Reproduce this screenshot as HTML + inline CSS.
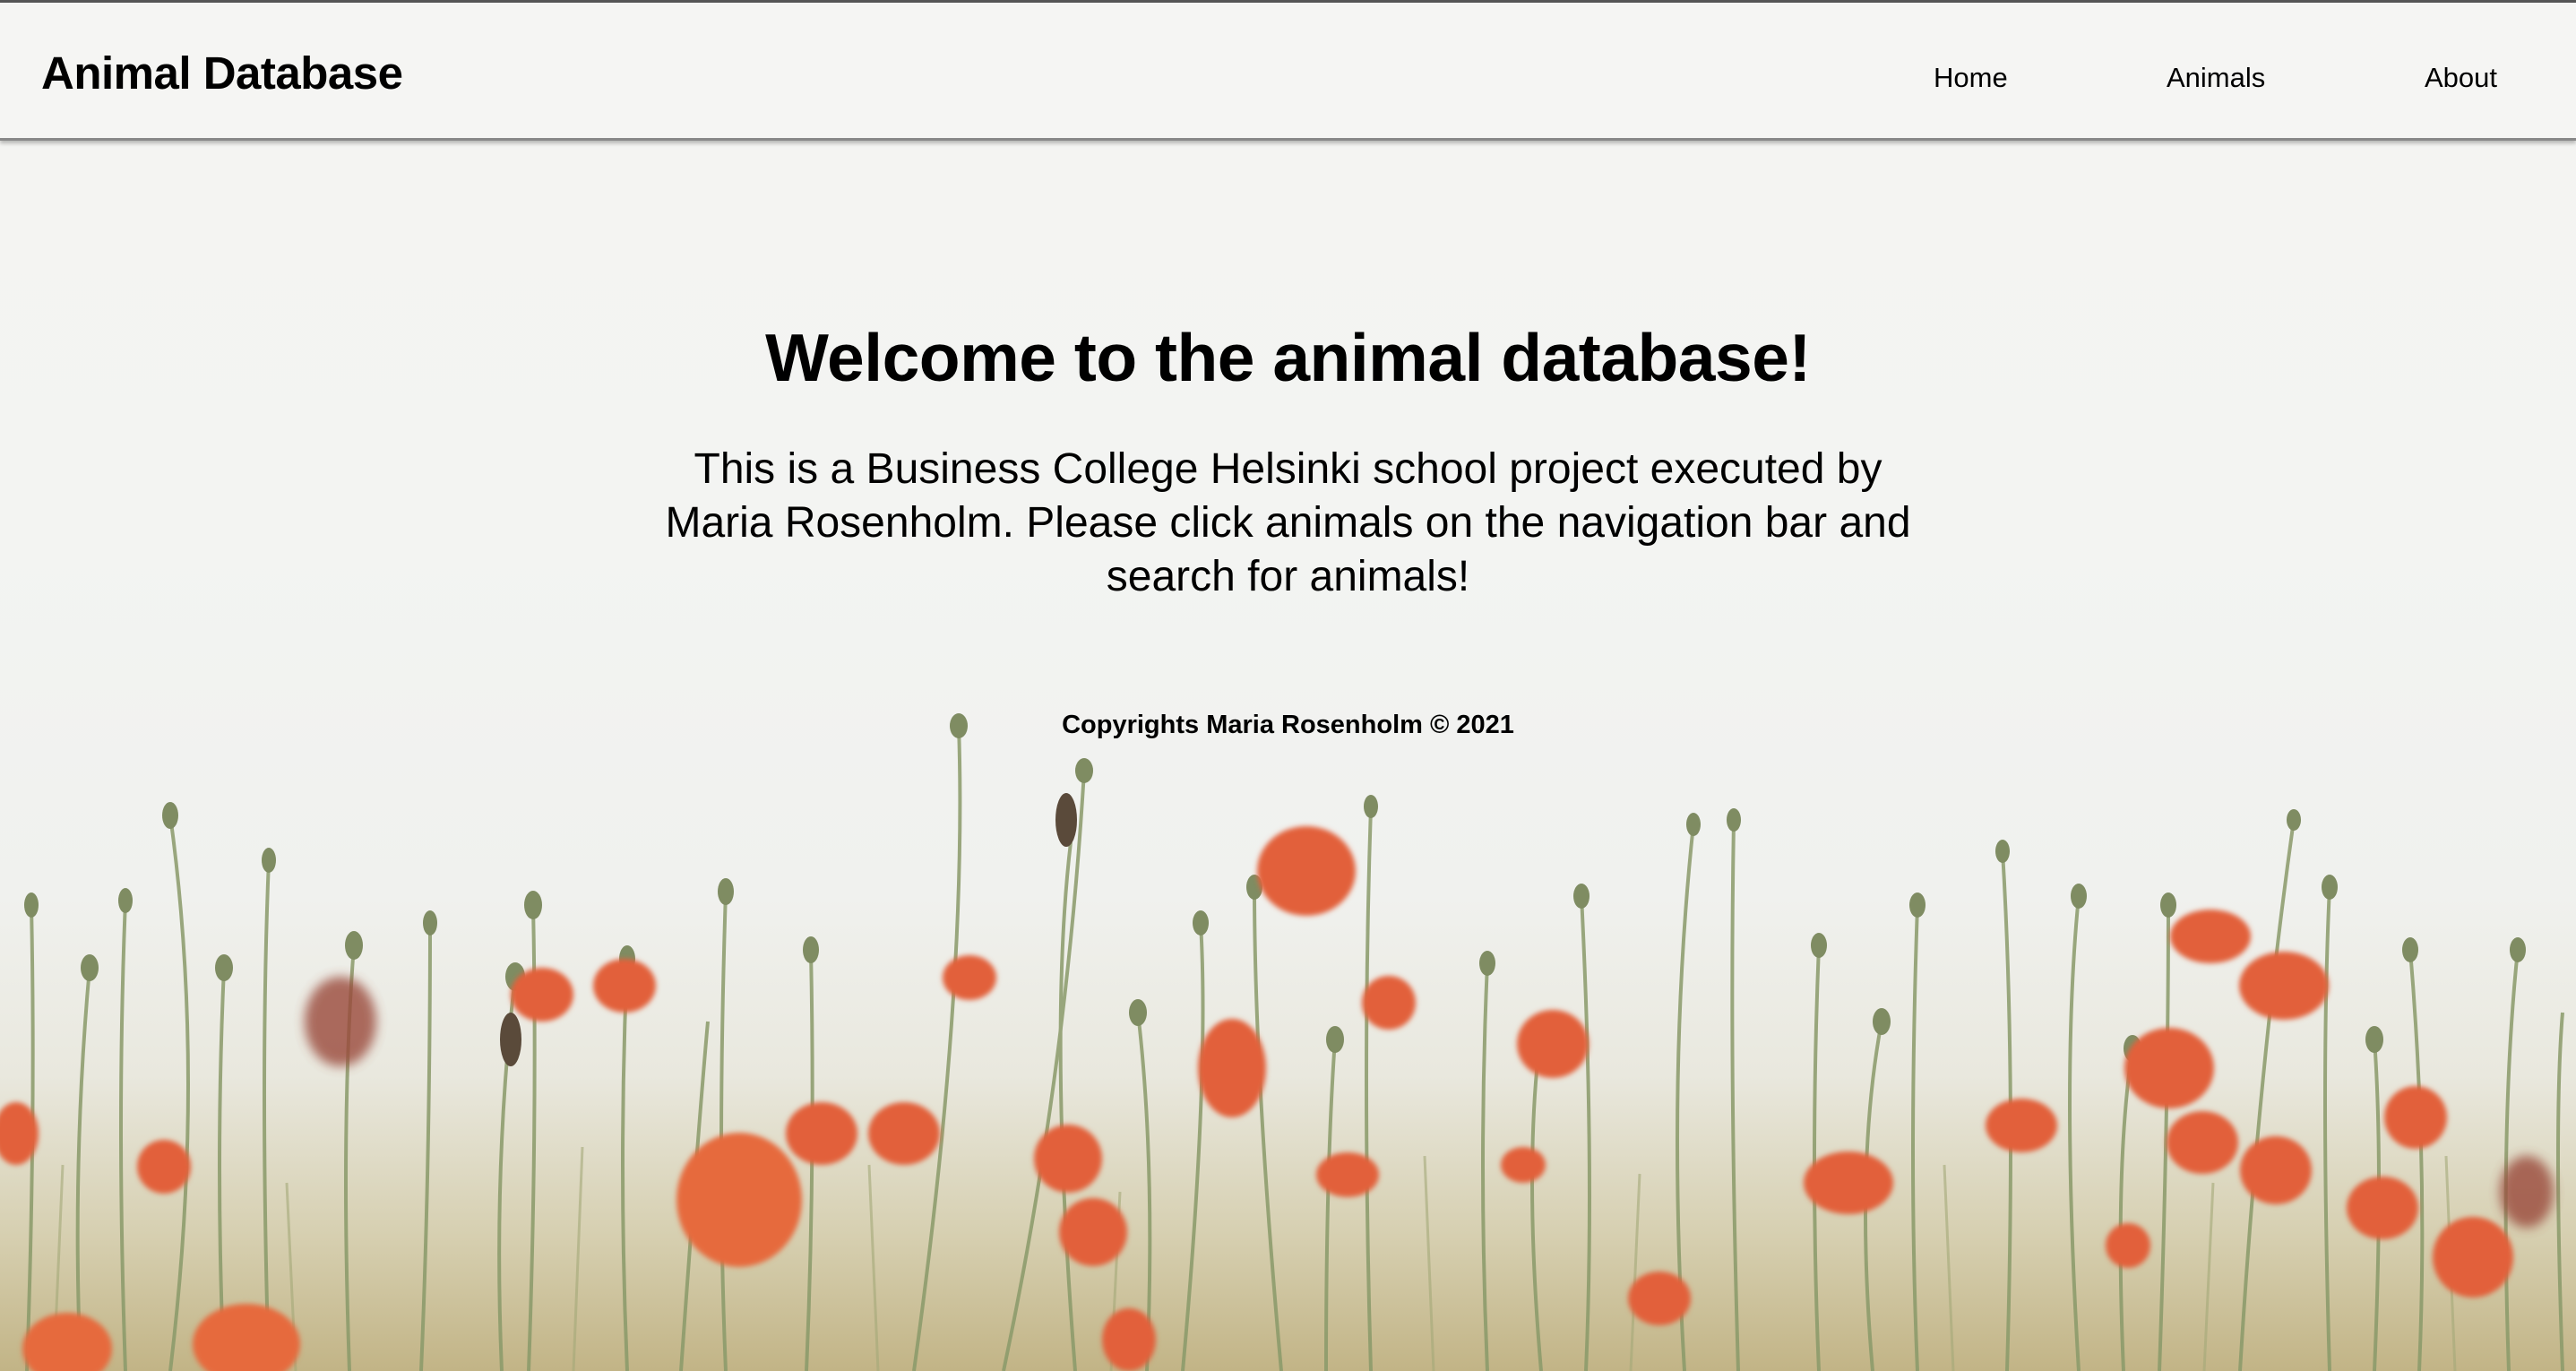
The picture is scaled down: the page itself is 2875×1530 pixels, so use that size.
<!DOCTYPE html>
<html><head><meta charset="utf-8"><style>
html,body{margin:0;padding:0}
body{width:2875px;height:1530px;overflow:hidden;position:relative;font-family:"Liberation Sans",sans-serif;background:linear-gradient(#f4f4f2 0,#f3f4f2 600px,#f0f1ee 1000px,#e9e8de 1200px,#d6cfb0 1380px,#c2b486 1530px)}
svg.bg{position:absolute;left:0;top:0}
.nav{position:absolute;left:0;top:0;width:2875px;height:157px;border-top:3px solid #555;border-bottom:3px solid #888;box-shadow:0 3px 4px rgba(0,0,0,.25);background:rgba(245,245,243,.9);box-sizing:border-box}
.brand{position:absolute;left:46px;top:49px;font-size:51px;font-weight:bold;color:#000;letter-spacing:-0.5px}
.nav a{position:absolute;top:66px;font-size:31px;color:#000;text-decoration:none}
h1{position:absolute;left:0;width:2875px;top:356px;margin:0;text-align:center;font-size:75px;font-weight:bold;color:#000;letter-spacing:-0.5px}
p.intro{position:absolute;left:720px;width:1435px;top:494px;margin:0;text-align:center;font-size:48px;line-height:60px;color:#000}
.copy{position:absolute;left:0;width:2875px;top:793px;text-align:center;font-size:29px;font-weight:bold;color:#000}
</style></head><body>
<svg class="bg" width="2875" height="1530" viewBox="0 0 2875 1530">
<defs><filter id="b"><feGaussianBlur stdDeviation="3"/></filter><filter id="b2"><feGaussianBlur stdDeviation="6"/></filter></defs>
<g stroke="#8a9a6a" stroke-width="4" fill="none" opacity=".85">
<path d="M30 1530 Q40 1250 35 1010"/><path d="M140 1530 Q130 1250 140 1005"/><path d="M190 1530 Q230 1200 190 910"/><path d="M300 1530 Q290 1200 300 960"/><path d="M390 1530 Q380 1250 395 1055"/><path d="M470 1530 Q480 1300 480 1030"/><path d="M590 1530 Q600 1250 595 1010"/><path d="M700 1530 Q690 1300 700 1070"/><path d="M810 1530 Q800 1300 810 995"/><path d="M900 1530 Q910 1300 905 1060"/><path d="M1020 1530 Q1080 1100 1070 810"/><path d="M1120 1530 Q1190 1200 1210 860"/><path d="M1200 1530 Q1170 1150 1195 940"/><path d="M1320 1530 Q1350 1200 1340 1030"/><path d="M1430 1530 Q1400 1200 1400 990"/><path d="M1530 1530 Q1520 1200 1530 900"/><path d="M1660 1530 Q1650 1300 1660 1075"/><path d="M1770 1530 Q1780 1300 1765 1000"/><path d="M1880 1530 Q1860 1200 1890 920"/><path d="M1940 1530 Q1930 1200 1935 915"/><path d="M2030 1530 Q2020 1300 2030 1055"/><path d="M2140 1530 Q2130 1300 2140 1010"/><path d="M2240 1530 Q2250 1200 2235 950"/><path d="M2320 1530 Q2300 1200 2320 1000"/><path d="M2410 1530 Q2420 1250 2420 1010"/><path d="M2500 1530 Q2520 1200 2560 915"/><path d="M2600 1530 Q2590 1200 2600 990"/><path d="M2700 1530 Q2710 1300 2690 1060"/><path d="M2800 1530 Q2790 1250 2810 1060"/><path d="M2860 1530 Q2850 1250 2860 1130"/>
<path d="M90 1530 Q80 1300 100 1080"/><path d="M250 1530 Q240 1300 250 1080"/><path d="M560 1530 Q550 1300 575 1090"/><path d="M760 1530 Q780 1250 790 1140"/><path d="M1280 1530 Q1290 1300 1270 1130"/><path d="M1480 1530 Q1480 1300 1490 1160"/><path d="M1720 1530 Q1700 1300 1720 1150"/><path d="M2090 1530 Q2070 1300 2100 1140"/><path d="M2370 1530 Q2360 1300 2380 1170"/><path d="M2650 1530 Q2660 1300 2650 1160"/>
</g>
<g stroke="#a3a878" stroke-width="3" fill="none" opacity=".6">
<path d="M60 1530 L70 1300"/><path d="M330 1530 L320 1320"/><path d="M640 1530 L650 1280"/><path d="M980 1530 L970 1300"/><path d="M1240 1530 L1250 1330"/><path d="M1600 1530 L1590 1290"/><path d="M1820 1530 L1830 1310"/><path d="M2180 1530 L2170 1300"/><path d="M2460 1530 L2470 1320"/><path d="M2740 1530 L2730 1290"/>
</g>
<g fill="#7f8c62">
<ellipse cx="35" cy="1010" rx="8" ry="14"/><ellipse cx="140" cy="1005" rx="8" ry="14"/><ellipse cx="190" cy="910" rx="9" ry="15"/><ellipse cx="300" cy="960" rx="8" ry="14"/><ellipse cx="395" cy="1055" rx="10" ry="16"/><ellipse cx="480" cy="1030" rx="8" ry="14"/><ellipse cx="595" cy="1010" rx="10" ry="16"/><ellipse cx="700" cy="1070" rx="9" ry="15"/><ellipse cx="810" cy="995" rx="9" ry="15"/><ellipse cx="905" cy="1060" rx="9" ry="15"/><ellipse cx="1070" cy="810" rx="10" ry="14"/><ellipse cx="1210" cy="860" rx="10" ry="14"/><ellipse cx="1340" cy="1030" rx="9" ry="14"/><ellipse cx="1400" cy="990" rx="9" ry="14"/><ellipse cx="1530" cy="900" rx="8" ry="13"/><ellipse cx="1660" cy="1075" rx="9" ry="14"/><ellipse cx="1765" cy="1000" rx="9" ry="14"/><ellipse cx="1890" cy="920" rx="8" ry="13"/><ellipse cx="1935" cy="915" rx="8" ry="13"/><ellipse cx="2030" cy="1055" rx="9" ry="14"/><ellipse cx="2140" cy="1010" rx="9" ry="14"/><ellipse cx="2235" cy="950" rx="8" ry="13"/><ellipse cx="2320" cy="1000" rx="9" ry="14"/><ellipse cx="2420" cy="1010" rx="9" ry="14"/><ellipse cx="2560" cy="915" rx="8" ry="12"/><ellipse cx="2600" cy="990" rx="9" ry="14"/><ellipse cx="2690" cy="1060" rx="9" ry="14"/><ellipse cx="2810" cy="1060" rx="9" ry="14"/>
<ellipse cx="100" cy="1080" rx="10" ry="15"/><ellipse cx="250" cy="1080" rx="10" ry="15"/><ellipse cx="575" cy="1090" rx="11" ry="16"/><ellipse cx="1270" cy="1130" rx="10" ry="15"/><ellipse cx="1490" cy="1160" rx="10" ry="15"/><ellipse cx="1720" cy="1150" rx="10" ry="15"/><ellipse cx="2100" cy="1140" rx="10" ry="15"/><ellipse cx="2380" cy="1170" rx="10" ry="15"/><ellipse cx="2650" cy="1160" rx="10" ry="15"/>
<ellipse cx="1190" cy="915" rx="12" ry="30" fill="#5a4a3a"/><ellipse cx="570" cy="1160" rx="12" ry="30" fill="#5a4a3a"/>
</g>
<g fill="#e2603a" filter="url(#b)">
<ellipse cx="1458" cy="972" rx="55" ry="50"/><ellipse cx="2421" cy="1192" rx="50" ry="45" /><ellipse cx="2549" cy="1100" rx="50" ry="38"/><ellipse cx="2467" cy="1045" rx="45" ry="30"/><ellipse cx="1375" cy="1192" rx="38" ry="55"/><ellipse cx="1192" cy="1293" rx="38" ry="38"/><ellipse cx="1220" cy="1375" rx="38" ry="38"/><ellipse cx="1733" cy="1165" rx="40" ry="38"/><ellipse cx="1550" cy="1119" rx="30" ry="30"/><ellipse cx="2063" cy="1320" rx="50" ry="35"/><ellipse cx="2540" cy="1306" rx="40" ry="38"/><ellipse cx="2760" cy="1403" rx="45" ry="45"/><ellipse cx="2659" cy="1348" rx="40" ry="35"/><ellipse cx="2256" cy="1256" rx="40" ry="30"/><ellipse cx="1082" cy="1091" rx="30" ry="25"/><ellipse cx="697" cy="1100" rx="35" ry="30"/><ellipse cx="605" cy="1110" rx="35" ry="30"/><ellipse cx="18" cy="1265" rx="25" ry="35"/><ellipse cx="183" cy="1302" rx="30" ry="30"/><ellipse cx="917" cy="1265" rx="40" ry="35"/><ellipse cx="1009" cy="1265" rx="40" ry="35"/><ellipse cx="1504" cy="1311" rx="35" ry="25"/><ellipse cx="1852" cy="1449" rx="35" ry="30"/><ellipse cx="2458" cy="1275" rx="40" ry="35"/><ellipse cx="2696" cy="1247" rx="35" ry="35"/><ellipse cx="2375" cy="1390" rx="25" ry="25"/><ellipse cx="1700" cy="1300" rx="25" ry="20"/><ellipse cx="1260" cy="1495" rx="30" ry="35"/>
</g>
<g fill="#e66a3e" filter="url(#b)">
<ellipse cx="825" cy="1339" rx="70" ry="75"/><ellipse cx="275" cy="1500" rx="60" ry="45"/><ellipse cx="75" cy="1505" rx="50" ry="40"/>
</g>
<g fill="#9a4a3a" filter="url(#b2)" opacity=".8"><ellipse cx="380" cy="1140" rx="40" ry="50"/><ellipse cx="2820" cy="1330" rx="30" ry="40"/></g>
</svg>
<div class="nav">
<div class="brand">Animal Database</div>
<a style="left:2158px">Home</a><a style="left:2418px">Animals</a><a style="left:2706px">About</a>
</div>
<h1>Welcome to the animal database!</h1>
<p class="intro">This is a Business College Helsinki school project executed by Maria Rosenholm. Please click animals on the navigation bar and search for animals!</p>
<div class="copy">Copyrights Maria Rosenholm © 2021</div>
</body></html>
